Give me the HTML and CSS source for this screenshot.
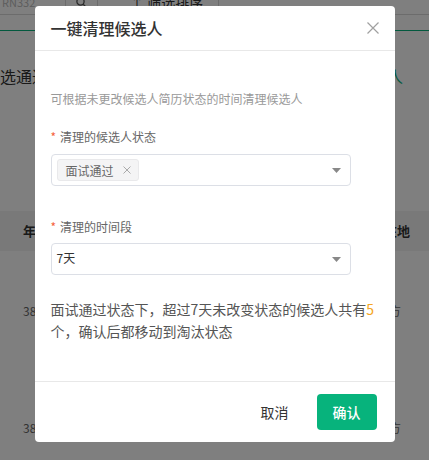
FILE: index.html
```html
<!DOCTYPE html>
<html lang="zh-CN">
<head>
  <meta charset="UTF-8" />
  <meta name="viewport" content="width=device-width, initial-scale=1.0"/>
  <title>一键清理候选人</title>
  <link rel="stylesheet" href="styles.css">
</head>
<body>

  <!-- Page behind the dialog -->
  <div class="page">
    <div class="toolbar">
      <div class="tool search-box">RN332</div>
      <div class="tool search-btn">
        <svg width="11" height="11" viewBox="0 0 11 11"><circle cx="4.5" cy="4.5" r="3.6" fill="none" stroke="#555" stroke-width="1.3"/><path d="M7.2 7.2 L10.2 10.2" stroke="#555" stroke-width="1.3"/></svg>
      </div>
      <div class="tool sort-btn">↑ 筛选排序</div>
    </div>
    <div class="tabs"></div>
    <div class="status-row">
      <span class="status-name">选通过</span>
      <span class="status-link">人</span>
    </div>
    <div class="table">
      <div class="row head"><span>年龄</span><span>所在地</span></div>
      <div class="row"><span>38</span><span>东南方</span></div>
      <div class="row last"><span>38</span><span>东南方</span></div>
    </div>
  </div>

  <!-- Dialog -->
  <div class="mask">
    <div class="dialog">
      <div class="dialog-header">
        <span class="dialog-title">一键清理候选人</span>
        <svg class="close" width="12" height="12" viewBox="0 0 12 12"><path d="M0.5 0.5 L11.5 11.5 M11.5 0.5 L0.5 11.5" stroke="#a0a0a0" stroke-width="1.2"/></svg>
      </div>

      <div class="dialog-body">
        <p class="desc">可根据未更改候选人简历状态的时间清理候选人</p>

        <div class="form-item">
          <div class="label"><i>*</i>清理的候选人状态</div>
          <div class="select">
            <span class="tag">面试通过
              <svg width="8" height="8" viewBox="0 0 8 8"><path d="M0.5 0.5 L7.5 7.5 M7.5 0.5 L0.5 7.5" stroke="#aaa" stroke-width="1"/></svg>
            </span>
            <svg class="arrow" width="9" height="5" viewBox="0 0 9 5"><polygon points="0,0 9,0 4.5,5" fill="#888"/></svg>
          </div>
        </div>

        <div class="form-item">
          <div class="label"><i>*</i>清理的时间段</div>
          <div class="select">
            <span class="value">7天</span>
            <svg class="arrow" width="9" height="5" viewBox="0 0 9 5"><polygon points="0,0 9,0 4.5,5" fill="#888"/></svg>
          </div>
        </div>

        <p class="msg">面试通过状态下，超过7天未改变状态的候选人共有<b>5</b>个，确认后都移动到淘汰状态</p>
      </div>

      <div class="dialog-footer">
        <button class="btn-cancel">取消</button>
        <button class="btn-ok">确认</button>
      </div>
    </div>
  </div>

</body>
</html>
```

FILE: styles.css
```css
* {
  box-sizing: border-box;
}

body {
  margin: 0;
  font-family: "Noto Sans CJK SC", "Noto Sans", sans-serif;
  color: #333;
  background: #fff;
  height: 460px;
  overflow: hidden;
}

/* Background page */
.page {
  height: 460px;
  overflow: hidden;
}

.toolbar {
  display: flex;
  height: 25px;
  margin-top: -10px;
  border-bottom: 1px solid #d9d9d9;
  font-size: 14px;
  line-height: 24px;
}

.tool {
  border-right: 1px solid #d9d9d9;
}

.search-box {
  width: 66px;
  padding-left: 2px;
  color: #bbb;
  font-size: 11px;
}

.search-btn {
  width: 32px;
  display: flex;
  align-items: center;
  justify-content: center;
}

.sort-btn {
  width: 121px;
  padding-left: 32px;
  color: #333;
}

.tabs {
  height: 16px;
  border-bottom: 1px solid #07b37d;
}

.status-row {
  display: flex;
  justify-content: space-between;
  height: 60px;
  padding: 34px 26px 0 0;
  font-size: 16px;
  line-height: 22px;
}

.status-link {
  color: #07b37d;
}

.table {
  margin-top: 120px;
}

.row {
  display: grid;
  grid-template-columns: 1fr 64px;
  align-items: start;
  height: 117px;
  padding: 50px 0 0 23px;
  font-size: 12px;
  line-height: 20px;
  color: #666;
}

.row.last {
  height: 92px;
}

.row.head {
  height: 40px;
  padding-top: 10px;
  background: #f2f2f2;
  color: #333;
  font-size: 13px;
  font-weight: bold;
}

.row.head span + span {
  padding-left: 6px;
}

/* Dialog */
.mask {
  position: fixed;
  top: 0;
  left: 0;
  right: 0;
  bottom: 0;
  background: rgba(0, 0, 0, 0.5);
  display: flex;
  justify-content: center;
  align-items: flex-start;
  padding-top: 6px;
}

.dialog {
  width: 360px;
  background: #fff;
  border-radius: 4px;
}

.dialog-header {
  display: flex;
  align-items: center;
  justify-content: space-between;
  height: 45px;
  padding: 0 16px;
  border-bottom: 1px solid #e8e8e8;
}

.dialog-title {
  font-size: 16px;
  font-weight: 500;
  color: #333;
}

.dialog-body {
  padding: 38px 16px 39px;
}

.desc {
  margin: 0 0 18px;
  font-size: 12px;
  line-height: 20px;
  color: #999;
}

.form-item {
  margin-bottom: 31px;
}

.form-item + .form-item {
  margin-bottom: 23px;
}

.label {
  margin-bottom: 7px;
  font-size: 12px;
  line-height: 20px;
  color: #666;
}

.form-item + .form-item .label {
  margin-bottom: 6px;
}

.label i {
  font-style: normal;
  color: #f5623d;
  margin-right: 4px;
}

.select {
  display: flex;
  align-items: center;
  width: 300px;
  height: 32px;
  padding: 0 9px 0 5px;
  border: 1px solid #dcdfe6;
  border-radius: 4px;
  font-size: 12px;
}

.tag {
  display: inline-flex;
  align-items: center;
  height: 22px;
  padding: 0 7px 0 8px;
  background: #f4f4f5;
  border: 1px solid #e9e9eb;
  border-radius: 3px;
  color: #666;
}

.tag svg {
  margin-left: 9px;
}

.value {
  color: #333;
  margin-top: -3px;
}

.arrow {
  margin-left: auto;
}

.msg {
  margin: 0;
  font-size: 14px;
  line-height: 22px;
  color: #555;
}

.msg b {
  font-weight: normal;
  color: #f5a623;
}

.dialog-footer {
  display: flex;
  justify-content: flex-end;
  padding: 12px 18px;
  border-top: 1px solid #e8e8e8;
}

.dialog-footer button {
  width: 60px;
  height: 36px;
  border: none;
  border-radius: 4px;
  font-family: inherit;
  font-size: 14px;
  cursor: pointer;
}

.btn-cancel {
  margin-right: 12px;
  background: none;
  color: #333;
}

.btn-ok {
  background: #07b37c;
  color: #fff;
  font-weight: 500;
}
```
